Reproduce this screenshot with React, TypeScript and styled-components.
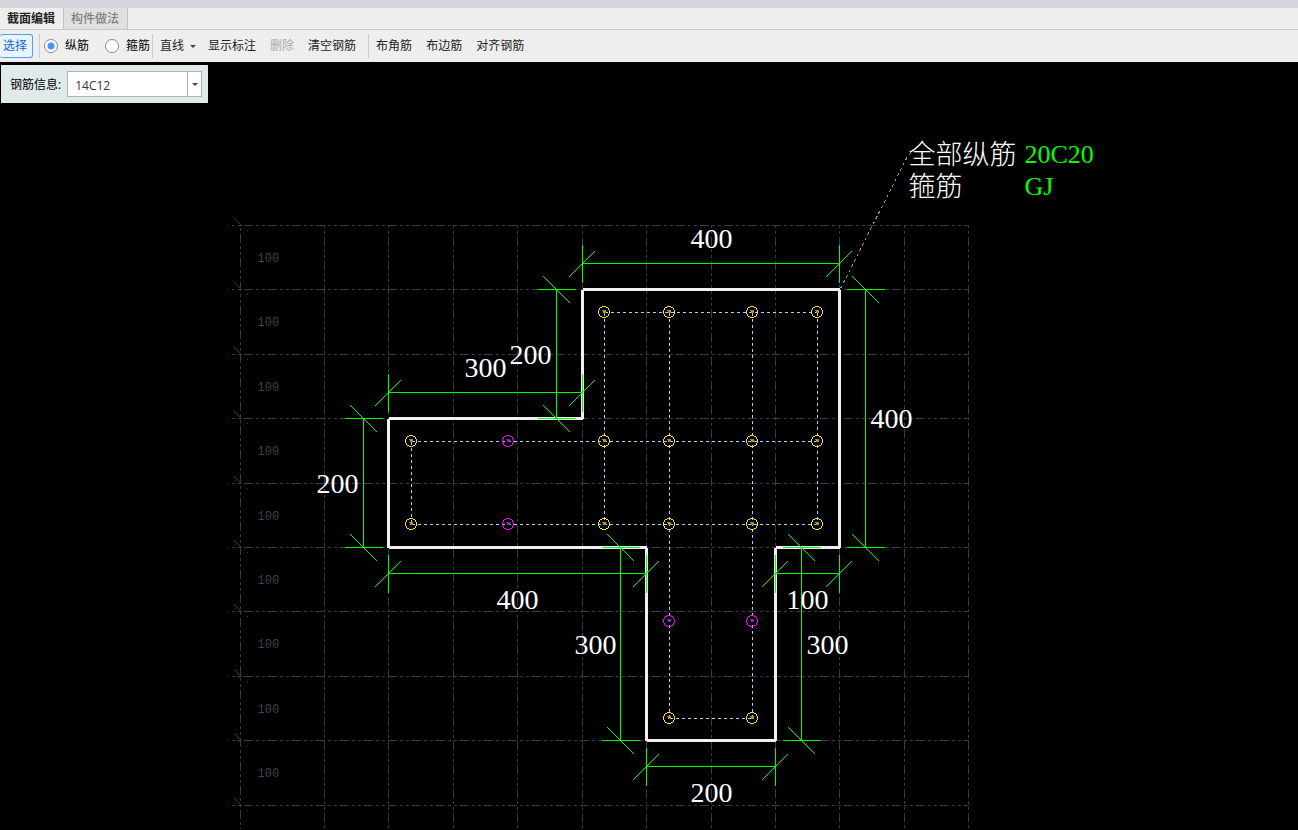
import { useState } from "react";
import styled, { createGlobalStyle } from "styled-components";

const GlobalStyle = createGlobalStyle`
  * { box-sizing: border-box; }
  html, body, #root { height: 100%; }
  body {
    margin: 0;
    background: #000;
    overflow: hidden;
    font-family: "Open Sans", "Noto Sans CJK SC", sans-serif;
    font-size: 12px;
    line-height: 16px;
    color: #222;
  }
  button, select { font: inherit; }
`;

const Shell = styled.div`
  display: flex;
  flex-direction: column;
  height: 100%;
`;

const TopStrip = styled.div`
  flex: none;
  height: 8px;
  background: #d4d5da;
`;

const TabBar = styled.nav`
  flex: none;
  display: flex;
  height: 22px;
  background: #eeeeee;
  border-bottom: 1px solid #c8c8c8;
`;

const Tab = styled.button<{ $active?: boolean }>`
  padding: 0 8px 0 7px;
  border: 0;
  border-right: 1px solid #c0c3c6;
  background: ${(p) => (p.$active ? "#eeeeee" : "#e0e0e0")};
  color: ${(p) => (p.$active ? "#222" : "#808080")};
  font-weight: ${(p) => (p.$active ? 700 : 500)};
`;

const Toolbar = styled.div`
  flex: none;
  display: flex;
  align-items: center;
  height: 32px;
  background: #eeeeee;
`;

const ToolButton = styled.button`
  display: flex;
  align-items: center;
  gap: 6px;
  height: 24px;
  padding: 0 7px;
  border: 0;
  background: transparent;
  color: #222;
  white-space: nowrap;
  &:disabled { color: #aaaaaa; }
`;

const DropButton = styled(ToolButton)`
  padding-right: 5px;
`;

const SelectButton = styled(ToolButton)`
  padding: 0 5px 0 3px;
  border: 1px solid #4a9ff5;
  border-left-width: 0;
  border-radius: 3px;
  background: #eaf4fe;
  color: #0f68d2;
`;

const Separator = styled.span<{ $before?: number; $after?: number }>`
  width: 1px;
  height: 24px;
  margin-left: ${(p) => p.$before ?? 0}px;
  margin-right: ${(p) => p.$after ?? 0}px;
  background: #cbcbcb;
`;

const RadioGroup = styled.div`
  display: flex;
  align-items: center;
  gap: 16px;
`;

const RadioLabel = styled.label`
  display: flex;
  align-items: center;
  gap: 7px;
  color: #000;
`;

const Radio = styled.input`
  appearance: none;
  width: 14px;
  height: 14px;
  margin: 0;
  border: 1px solid #8c8c8c;
  border-radius: 50%;
  background: #fff;
  &:checked {
    background: radial-gradient(circle, #4499f4 0 3px, #fff 4px);
  }
`;

const ToolGroup = styled.div`
  display: flex;
`;

const Caret = styled.span`
  border: 3px solid transparent;
  border-top-color: #444;
  border-bottom-width: 0;
`;

const Workspace = styled.main`
  flex: 1;
  min-height: 0;
  position: relative;
  background: #000;
`;

const InfoPanel = styled.div`
  position: absolute;
  top: 3px;
  left: 1px;
  display: flex;
  align-items: center;
  gap: 6px;
  height: 38px;
  padding: 0 6px 0 9px;
  background: #e1eaea;
  color: #000;
`;

const InfoLabel = styled.label`
  padding-top: 2px;
`;

const Combo = styled.div`
  position: relative;
  display: flex;
  width: 135px;
  height: 26px;
`;

const ComboSelect = styled.select`
  appearance: none;
  width: 100%;
  padding: 4px 20px 0 7px;
  border: 1px solid #aab2b4;
  border-radius: 0;
  background: #fff;
  color: #333;
`;

const ComboArrow = styled.span`
  position: absolute;
  top: 1px;
  right: 1px;
  bottom: 1px;
  display: flex;
  align-items: center;
  justify-content: center;
  width: 14px;
  border-left: 1px solid #aab2b4;
  pointer-events: none;
`;

const Drawing = styled.svg`
  display: block;
  width: 100%;
  height: 100%;
`;

const Lines = styled.g<{ $color: string; $width?: number; $dash?: string }>`
  fill: none;
  stroke: ${(p) => p.$color};
  stroke-width: ${(p) => p.$width ?? 1};
  stroke-dasharray: ${(p) => p.$dash ?? "none"};
  shape-rendering: crispEdges;
`;

const DimText = styled.text`
  font-family: "Liberation Serif", serif;
  font-size: 28px;
  fill: #fff;
`;

const GridText = styled.text`
  font-family: "Liberation Mono", monospace;
  font-size: 12px;
  fill: #3c4450;
`;

const NoteText = styled.text`
  font-family: "Liberation Serif", "Noto Sans CJK SC", serif;
  font-size: 27px;
  font-weight: 300;
  fill: #fff;
`;

const NoteValue = styled.text`
  font-family: "Liberation Serif", serif;
  font-size: 26px;
  fill: #00ff00;
`;

const gridX = [324, 388, 453, 517, 582, 646, 711, 775, 839, 904, 968];
const gridY = [225, 289, 354, 418, 483, 547, 611, 676, 740, 805];

const outline = [
  [582, 289], [839, 289], [839, 547], [775, 547], [775, 740],
  [646, 740], [646, 547], [388, 547], [388, 418], [582, 418],
];

const stirrups = [
  [604, 312, 817, 312], [411, 441, 817, 441], [411, 524, 817, 524], [669, 718, 752, 718],
  [411, 441, 411, 524], [604, 312, 604, 524], [669, 312, 669, 718],
  [752, 312, 752, 718], [817, 312, 817, 524],
];

const cornerBars = [
  [604, 312], [669, 312], [752, 312], [817, 312],
  [411, 441], [604, 441], [669, 441], [752, 441], [817, 441],
  [411, 524], [604, 524], [669, 524], [752, 524], [817, 524],
  [669, 718], [752, 718],
];
const sideBars = [[508, 441], [508, 524], [669, 621], [752, 621]];

const horizontalDims = [
  [582, 839, 263], [388, 582, 392], [388, 646, 573], [775, 839, 573], [646, 775, 766],
];
const verticalDims = [
  [556, 289, 418], [363, 418, 547], [865, 289, 547], [620, 547, 740], [801, 547, 740],
];

const dimLabels: [number, number, string][] = [
  [690, 247, "400"], [509, 363, "200"], [464, 376, "300"], [316, 492, "200"],
  [870, 427, "400"], [496, 608, "400"], [786, 608, "100"], [574, 653, "300"],
  [806, 653, "300"], [690, 801, "200"],
];

const horizontalDim = ([x1, x2, y]: number[]) =>
  `M${x1} ${y}H${x2}` +
  [x1, x2].map((x) => `M${x} ${y - 19}V${y + 19}M${x - 14} ${y + 14}L${x + 12} ${y - 12}`).join("");

const verticalDim = ([x, y1, y2]: number[]) =>
  `M${x} ${y1}V${y2}` +
  [y1, y2].map((y) => `M${x - 19} ${y}H${x + 19}M${x - 13} ${y - 13}L${x + 14} ${y + 14}`).join("");

function Bar({ x, y, color, core, coreEdge }: { x: number; y: number; color: string; core: string; coreEdge: string }) {
  return (
    <g>
      <circle cx={x - 0.5} cy={y - 0.5} r={5.5} stroke={color} />
      <path d={`M${x - 2.5} ${y - 2}h4M${x - 1.5} ${y}h3`} stroke={coreEdge} />
      <path d={`M${x - 1.5} ${y - 1}h3`} stroke={core} />
    </g>
  );
}

function SectionDrawing() {
  return (
    <Drawing role="img" aria-label="截面配筋图">
      {/* window coordinates, shifted to the pixel centres of the canvas */}
      <g transform="translate(0.5 -61.5)">
        <Lines $color="#343c48" $dash="9 3 3 3 3 3">
          {gridY.map((y) => (
            <line key={y} x1={227.5} y1={y} x2={968} y2={y} strokeDashoffset={8} />
          ))}
          <line x1={240} y1={225} x2={240} y2={828} strokeDashoffset={16} />
          {gridX.map((x) => (
            <line key={x} x1={x} y1={224.5} x2={x} y2={828} strokeDashoffset={12} />
          ))}
        </Lines>
        <Lines $color="#343c48">
          {gridY.map((y) => (
            <path key={y} d={`M234 ${y - 7}L242 ${y + 1}M246 ${y + 5}h1`} />
          ))}
        </Lines>
        {gridY.slice(0, -1).map((y) => (
          <GridText key={y} x={257} y={y + 36}>100</GridText>
        ))}
        <Lines $color="#f0f0f0" $width={3}>
          {outline.map(([x, y], i) => {
            const [x2, y2] = outline[(i + 1) % outline.length];
            return <line key={i} x1={x} y1={y} x2={x2} y2={y2} />;
          })}
        </Lines>
        <Lines $color="#b0d0f4" $dash="3 3">
          {stirrups.map(([x1, y1, x2, y2], i) => (
            <line key={i} x1={x1} y1={y1} x2={x2} y2={y2} />
          ))}
        </Lines>
        <Lines $color="#ffe030">
          {cornerBars.map(([x, y]) => (
            <Bar key={`${x}-${y}`} x={x} y={y} color="#ffe030" core="#f09010" coreEdge="#8c9430" />
          ))}
          {sideBars.map(([x, y]) => (
            <Bar key={`${x}-${y}`} x={x} y={y} color="#ff00ff" core="#c020e0" coreEdge="#5a30b0" />
          ))}
        </Lines>
        <Lines $color="#00ff00">
          {horizontalDims.map((d, i) => <path key={i} d={horizontalDim(d)} />)}
          {verticalDims.map((d, i) => <path key={i} d={verticalDim(d)} />)}
        </Lines>
        {dimLabels.map(([x, y, label]) => (
          <DimText key={`${x}-${y}`} x={x} y={y}>{label}</DimText>
        ))}
        <Lines $color="#909090" $dash="3 3">
          <path d="M840 288L907 156L911 152" />
        </Lines>
        <NoteText x={908} y={163}>全部纵筋</NoteText>
        <NoteValue x={1024} y={162}>20C20</NoteValue>
        <NoteText x={908} y={195}>箍筋</NoteText>
        <NoteValue x={1024} y={194}>GJ</NoteValue>
      </g>
    </Drawing>
  );
}

export default function App() {
  const [barKind, setBarKind] = useState("main");
  return (
    <Shell>
      <GlobalStyle />
      <TopStrip />
      <TabBar>
        <Tab $active>截面编辑</Tab>
        <Tab>构件做法</Tab>
      </TabBar>
      <Toolbar>
        <SelectButton>选择</SelectButton>
        <Separator $before={6} $after={4} />
        <RadioGroup>
          <RadioLabel>
            <Radio type="radio" name="kind" checked={barKind === "main"} onChange={() => setBarKind("main")} />
            纵筋
          </RadioLabel>
          <RadioLabel>
            <Radio type="radio" name="kind" checked={barKind === "stirrup"} onChange={() => setBarKind("stirrup")} />
            箍筋
          </RadioLabel>
        </RadioGroup>
        <Separator $before={2} />
        <ToolGroup>
          <DropButton>直线<Caret /></DropButton>
          <ToolButton>显示标注</ToolButton>
          <ToolButton disabled>删除</ToolButton>
          <ToolButton>清空钢筋</ToolButton>
        </ToolGroup>
        <Separator $before={5} />
        <ToolGroup>
          <ToolButton>布角筋</ToolButton>
          <ToolButton>布边筋</ToolButton>
          <ToolButton>对齐钢筋</ToolButton>
        </ToolGroup>
      </Toolbar>
      <Workspace>
        <SectionDrawing />
        <InfoPanel>
          <InfoLabel htmlFor="rebar-info">钢筋信息:</InfoLabel>
          <Combo>
            <ComboSelect id="rebar-info" defaultValue="14C12">
              <option>14C12</option>
            </ComboSelect>
            <ComboArrow><Caret /></ComboArrow>
          </Combo>
        </InfoPanel>
      </Workspace>
    </Shell>
  );
}
